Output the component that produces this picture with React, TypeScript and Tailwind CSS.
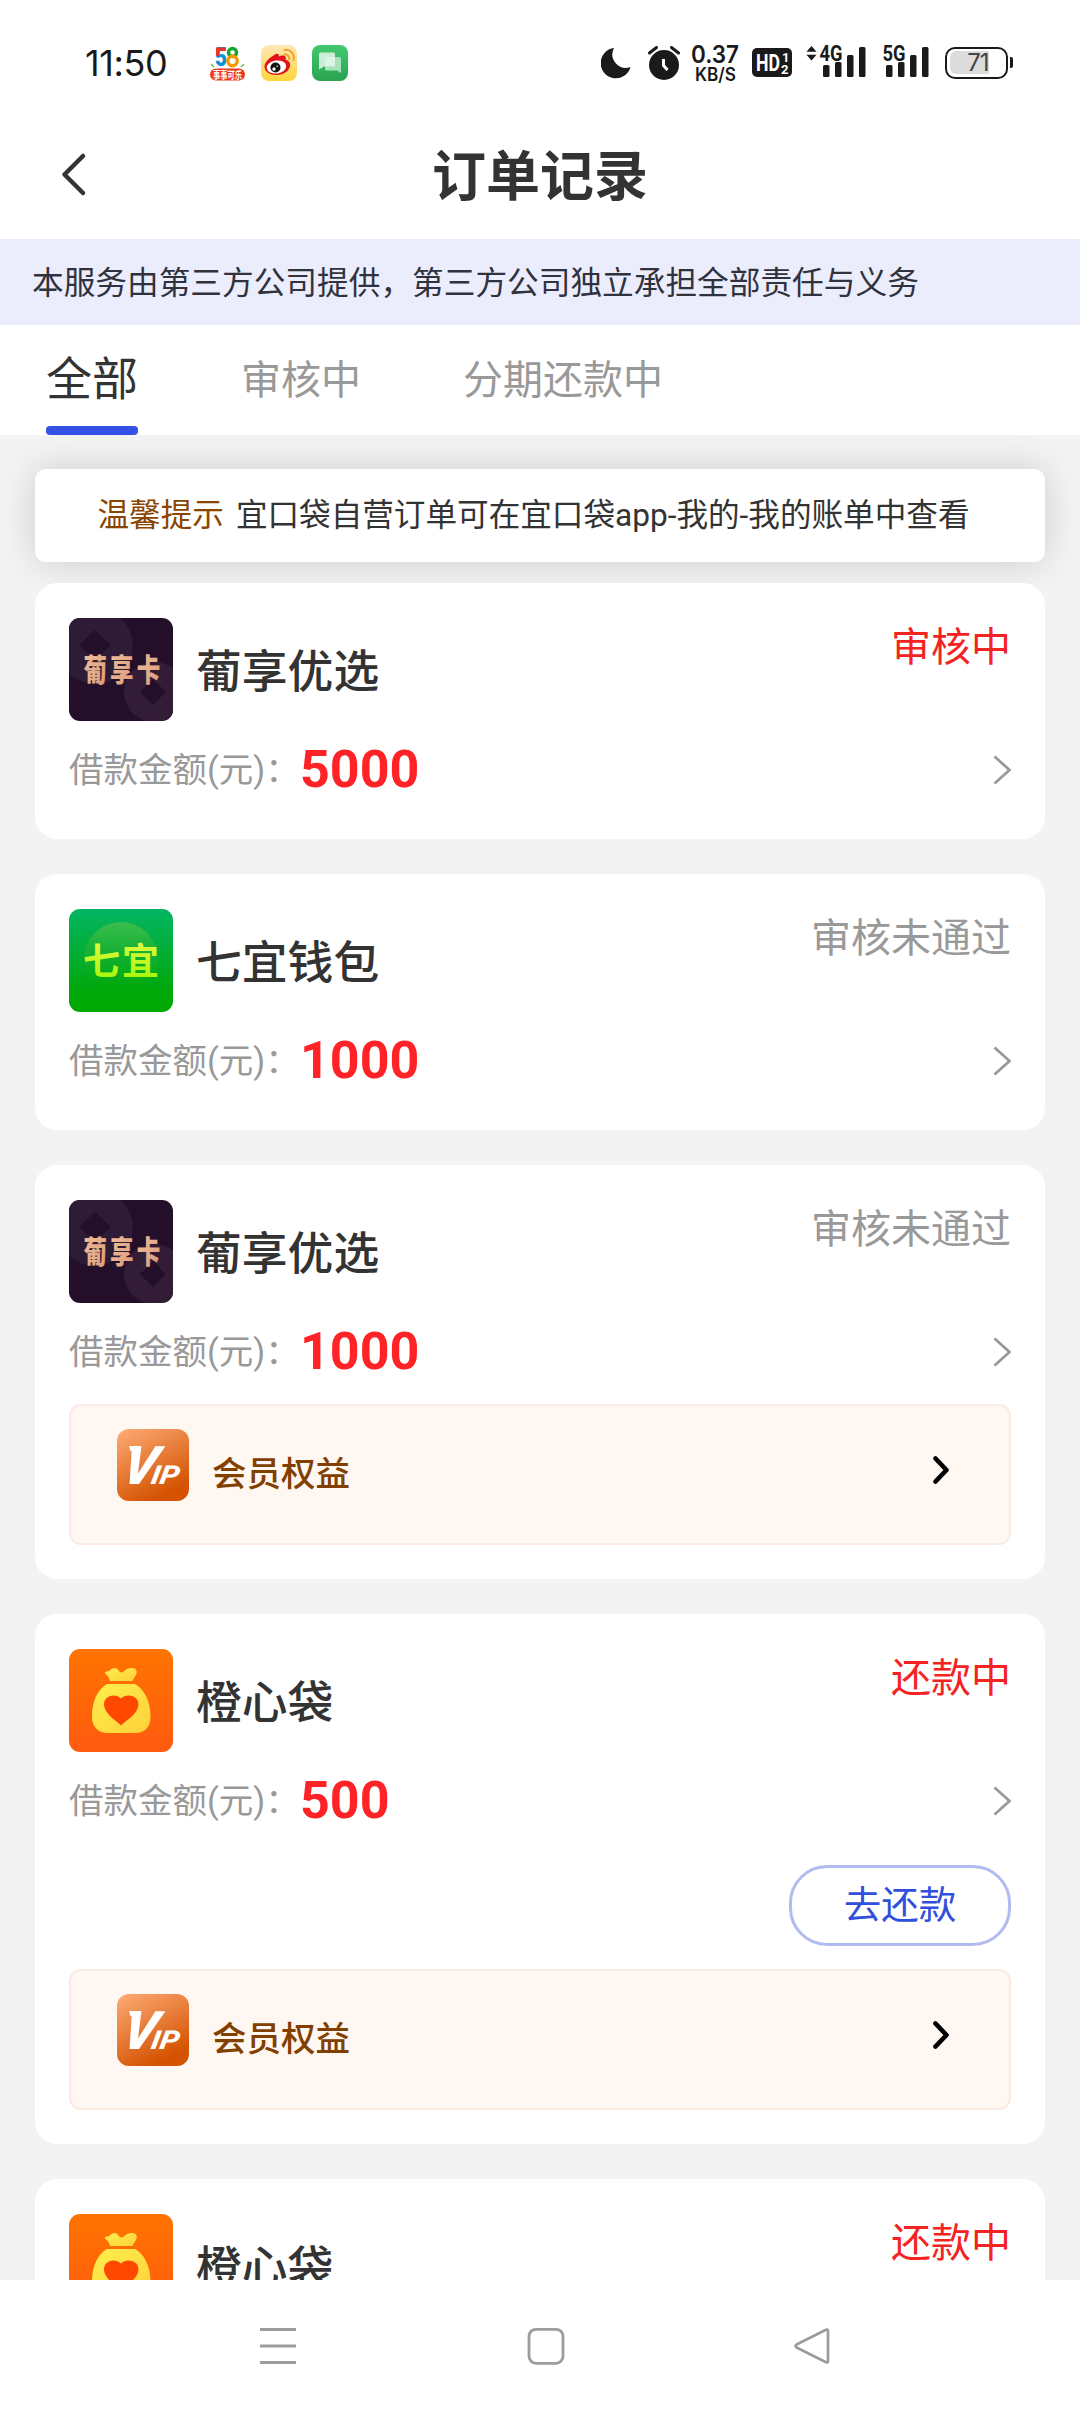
type Order = {
  name: string;
  logo: "puxiang" | "qiyi" | "chengxin";
  amount: string;
  status: string;
  active?: boolean;
  repay?: boolean;
  member?: boolean;
};

const orders: Order[] = [
  { name: "葡享优选", logo: "puxiang", amount: "5000", status: "审核中", active: true },
  { name: "七宜钱包", logo: "qiyi", amount: "1000", status: "审核未通过" },
  { name: "葡享优选", logo: "puxiang", amount: "1000", status: "审核未通过", member: true },
  {
    name: "橙心袋",
    logo: "chengxin",
    amount: "500",
    status: "还款中",
    active: true,
    repay: true,
    member: true,
  },
  {
    name: "橙心袋",
    logo: "chengxin",
    amount: "500",
    status: "还款中",
    active: true,
    repay: true,
    member: true,
  },
];

function Signal({ label, arrows }: { label: string; arrows?: boolean }) {
  return (
    <svg width="62" height="36" viewBox="0 0 62 36" className="block overflow-visible" fill="#1a1a1a">
      {arrows && (
        <>
          <path d="M5.5 1 10.500 6.800H.5z" />
          <path d="M5.5 15.500.5 9.700h10z" />
        </>
      )}
      <text
        x="13.500"
        y="16"
        fontSize="22"
        fontWeight="700"
        fontFamily="Roboto, sans-serif"
        textLength="23"
        lengthAdjust="spacingAndGlyphs"
      >
        {label}
      </text>
      <rect x="17" y="20" width="6.500" height="12" rx="1.500" />
      <rect x="29" y="17" width="6.500" height="15" rx="1.500" />
      <rect x="41" y="10" width="6.500" height="22" rx="1.500" />
      <rect x="53" y="2" width="6.500" height="30" rx="1.500" />
    </svg>
  );
}

function AppBadges() {
  return (
    <div className="ml-[42px] flex items-center gap-[15px]">
      <svg width="37" height="36" viewBox="0 0 37 36" className="overflow-visible">
        <text
          x="6"
          y="20.500"
          fill="#0a8fd8"
          fontFamily="Roboto, sans-serif"
          fontWeight="900"
          fontSize="25"
          textLength="12"
          lengthAdjust="spacingAndGlyphs"
        >
          5
        </text>
        <path d="M17 4.300H8.700V11" fill="none" stroke="#e8342c" strokeWidth="3.500" />
        <circle cx="23.500" cy="7.500" r="4" fill="none" stroke="#12a82c" strokeWidth="3.400" />
        <circle cx="23.500" cy="16" r="4.700" fill="none" stroke="#f59a00" strokeWidth="3.400" />
        <path d="M2 19l3 3M35 19l-3 3" stroke="#7cc04b" strokeWidth="1.500" />
        <rect x="1" y="23.500" width="35" height="12" rx="6" fill="#ee3a1c" />
        <text
          x="4"
          y="33.500"
          fill="#fff"
          fontSize="10.500"
          fontWeight="700"
          fontFamily="'Noto Sans CJK SC', sans-serif"
          textLength="29"
          lengthAdjust="spacingAndGlyphs"
        >
          事事可乐
        </text>
      </svg>
      <svg width="36" height="36" viewBox="0 0 36 36">
        <defs>
          <linearGradient id="wb" x1="0" y1="0" x2="0" y2="1">
            <stop offset="0" stopColor="#fde9b8" />
            <stop offset="1" stopColor="#ffd43a" />
          </linearGradient>
        </defs>
        <rect width="36" height="36" rx="8" fill="url(#wb)" />
        <path
          d="M12.500 10.500c2-2 4.500-2.500 5.200-1 .3.700.2 1.500.1 2 2.500-1.200 6.700-1.700 7 1.300.1.800-.1 1.400-.3 1.900 3 .8 5 2.700 4.600 6-.6 5-6.500 9.300-13.600 9.300C9 30 3.500 27 3.500 21.500c0-4 4.500-8.500 9-11z"
          fill="#e1141c"
        />
        <ellipse cx="15.500" cy="22" rx="9.800" ry="6.500" fill="#fff" transform="rotate(-7 15.500 22)" />
        <circle cx="14.500" cy="22.500" r="5" fill="#111" />
        <circle cx="13" cy="24" r="1.700" fill="#fff" />
        <circle cx="16.200" cy="21.300" r=".8" fill="#fff" />
        <path
          d="M23.500 9.500c3-.5 5.500 2 4.800 5M23.500 5c6-1 10.500 4 9 10"
          fill="none"
          stroke="#f0a02c"
          strokeWidth="2"
          strokeLinecap="round"
        />
      </svg>
      <svg width="36" height="36" viewBox="0 0 36 36">
        <defs>
          <linearGradient id="msg" x1="0" y1="0" x2="0" y2="1">
            <stop offset="0" stopColor="#41c96f" />
            <stop offset="1" stopColor="#2ba351" />
          </linearGradient>
        </defs>
        <rect width="36" height="36" rx="8" fill="url(#msg)" />
        <path
          d="M13 12h14.500a1.500 1.500 0 0 1 1.500 1.500V28l-4-2.500H14.500a1.500 1.500 0 0 1-1.500-1.500z"
          fill="#a8e2bb"
        />
        <path
          d="M8.500 7.500h13A1.500 1.500 0 0 1 23 9v11a1.500 1.500 0 0 1-1.500 1.500H12L7 24.500V9a1.500 1.500 0 0 1 1.500-1.500z"
          fill="#e4f7ea"
          fillOpacity=".85"
        />
      </svg>
    </div>
  );
}

function StatusBar() {
  return (
    <div className="flex h-[125px] items-center pl-[85px] pr-[67px] text-[#1a1a1a]">
      <span className="w-[82px] whitespace-nowrap font-[Inter] text-[36px] leading-[48px] tracking-[-0.4px]">
        11:50
      </span>
      <AppBadges />
      <div className="ml-auto flex items-center">
        <svg width="30" height="32" viewBox="0 0 30 32">
          <path d="M13 1A15.200 15.200 0 1 0 29.500 20 13.500 13.500 0 0 1 13 1z" fill="#1a1a1a" />
        </svg>
        <svg width="32" height="36" viewBox="0 0 32 36" className="ml-[17px]">
          <circle cx="16" cy="20" r="15" fill="#1a1a1a" />
          <path
            d="M1.500 8 8.500 2.500M30.500 8l-7-5.500"
            stroke="#1a1a1a"
            strokeWidth="3"
            strokeLinecap="round"
          />
          <path d="M15.500 14v6.500l4 4.500" fill="none" stroke="#fff" strokeWidth="3" />
        </svg>
        <svg
          width="49"
          height="40"
          viewBox="0 0 49 40"
          className="ml-[11px] overflow-visible"
          fill="#1a1a1a"
          fontFamily="Inter, sans-serif"
          fontWeight="600"
        >
          <text x="0" y="20" fontSize="24" textLength="48" lengthAdjust="spacingAndGlyphs">
            0.37
          </text>
          <text x="4" y="38" fontSize="18.500" textLength="41" lengthAdjust="spacingAndGlyphs">
            KB/S
          </text>
        </svg>
        <svg width="40" height="29" viewBox="0 0 40 29" className="ml-[12px]">
          <rect width="40" height="29" rx="5" fill="#1a1a1a" />
          <g fill="#fff" fontFamily="Roboto, sans-serif" fontWeight="700">
            <text x="4" y="23" fontSize="23" textLength="24" lengthAdjust="spacingAndGlyphs">
              HD
            </text>
            <text x="30" y="14" fontSize="13">
              1
            </text>
            <text x="29" y="26" fontSize="13">
              2
            </text>
          </g>
        </svg>
        <div className="ml-[14px]">
          <Signal label="4G" arrows />
        </div>
        <div className="ml-[1px]">
          <Signal label="5G" />
        </div>
        <div className="ml-[14px] flex items-center">
          <div className="flex h-[32px] w-[63px] items-center rounded-[10px] border-2 border-[#1a1a1a] p-[2.500px]">
            <div className="flex h-full w-[39px] items-center justify-end rounded-l-[6px] bg-[#dcdcdc] font-[Inter] text-[24px] leading-[24px] tracking-[-1px] text-[#444]">
              71
            </div>
          </div>
          <div className="ml-[2px] h-[11px] w-[3px] rounded-r-[2px] bg-[#1a1a1a]" />
        </div>
      </div>
    </div>
  );
}

function Header() {
  return (
    <header className="flex h-[114px] items-start pl-[60px] pr-[60px]">
      <svg width="28" height="46" viewBox="0 0 28 46" className="mt-[25.500px] shrink-0">
        <path
          d="M23 5 4.500 23.500 23 42"
          fill="none"
          stroke="#333"
          strokeWidth="4.500"
          strokeLinecap="round"
          strokeLinejoin="round"
        />
      </svg>
      <h1 className="flex-1 pr-[28px] text-center text-[54px] font-bold leading-[105px] text-[#333]">
        订单记录
      </h1>
    </header>
  );
}

function Tabs() {
  return (
    <nav className="relative z-10 flex h-[110px] items-start bg-white pl-[46px] text-[40px] leading-[112px] text-[#999]">
      <div className="flex h-full w-[92px] flex-col">
        <span className="h-[101px] text-[46px] leading-[108px] text-[#333]">全部</span>
        <span className="h-[9px] rounded-[4px] bg-[#3451e6]" />
      </div>
      <span className="ml-[103px]">审核中</span>
      <span className="ml-[102px]">分期还款中</span>
    </nav>
  );
}

function Logo({ kind }: { kind: Order["logo"] }) {
  if (kind === "puxiang") {
    return (
      <svg width="104" height="103" viewBox="0 0 104 103" className="shrink-0 rounded-[11px]">
        <defs>
          <linearGradient id="px" x1="0" y1="0" x2="1" y2="1">
            <stop offset="0" stopColor="#f3c3a0" />
            <stop offset="1" stopColor="#d99876" />
          </linearGradient>
        </defs>
        <rect width="104" height="103" fill="#230f29" />
        <path
          fillRule="evenodd"
          d="M-12 28a38 38 0 1 0 76 0 38 38 0 1 0-76 0zM26 12l16 15-16 15-16-15z"
          fill="#2e1b35"
        />
        <path
          fillRule="evenodd"
          d="M55 74a30 30 0 1 0 60 0 30 30 0 1 0-60 0zM84 61l13 13-13 13-13-13z"
          fill="#331d36"
        />
        <g fill="url(#px)" fontFamily="'Noto Sans CJK SC', sans-serif" fontWeight="900" fontSize="31">
          <text x="19" y="63" transform="scale(.76 1)">
            葡
          </text>
          <text x="54" y="63" transform="scale(.76 1)">
            享
          </text>
          <text x="89" y="63" transform="scale(.76 1)">
            卡
          </text>
        </g>
      </svg>
    );
  }

  if (kind === "qiyi") {
    return (
      <svg width="104" height="103" viewBox="0 0 104 103" className="shrink-0 rounded-[11px]">
        <defs>
          <linearGradient id="qyBg" x1="0" y1="0" x2="0" y2="1">
            <stop offset="0" stopColor="#04b563" />
            <stop offset=".8" stopColor="#00a80a" />
            <stop offset="1" stopColor="#00a800" />
          </linearGradient>
          <linearGradient id="qyDisc" x1="0" y1="0" x2="0" y2="1">
            <stop offset="0" stopColor="#4bbf4b" stopOpacity=".8" />
            <stop offset=".9" stopColor="#10a810" stopOpacity="0" />
          </linearGradient>
          <linearGradient id="qyText" x1="0" y1="0" x2="0" y2="1">
            <stop offset="0" stopColor="#f0fb4a" />
            <stop offset="1" stopColor="#9cf500" />
          </linearGradient>
        </defs>
        <rect width="104" height="103" fill="url(#qyBg)" />
        <circle cx="52" cy="50" r="37" fill="url(#qyDisc)" />
        <g fill="url(#qyText)" fontFamily="'Noto Sans CJK SC', sans-serif" fontWeight="700" fontSize="37">
          <text x="14" y="66">
            七
          </text>
          <text x="53" y="66">
            宜
          </text>
        </g>
      </svg>
    );
  }

  return (
    <svg width="104" height="103" viewBox="0 0 104 103" className="shrink-0 rounded-[11px]">
      <defs>
        <linearGradient id="cxBg" x1="0" y1="0" x2="0" y2="1">
          <stop offset="0" stopColor="#ff7400" />
          <stop offset="1" stopColor="#ff5a10" />
        </linearGradient>
        <linearGradient id="cxBag" x1="0" y1="0" x2="1" y2="1">
          <stop offset="0" stopColor="#fff04e" />
          <stop offset="1" stopColor="#fdcf38" />
        </linearGradient>
      </defs>
      <rect width="104" height="103" fill="url(#cxBg)" />
      <path
        d="M41 32c-.5-3-2-5-4.500-7-1.300-1-.5-2.500 1.500-2.500 3 0 4-3.500 7.500-3.500 4 0 4 4.500 7 4.500 2.700 0 4-4.500 9.500-4.500 4.500 0 6.500 2 5.500 5.500-.8 3-3 4.500-4 7.500z"
        fill="url(#cxBag)"
      />
      <path
        d="M38 35h28c9 5 15.500 17 15.500 32.500C81.500 78 76 84 66 84H39c-10 0-16-6-16-16.500C23 52 29 40 38 35z"
        fill="url(#cxBag)"
      />
      <path
        d="M52 76.500C46 71 35 64 35 55.500c0-9.500 12-11.500 17-6 5-5.500 17.500-3.500 17.500 6 0 8.500-11.500 15.500-17.500 21z"
        fill="#ff4800"
      />
    </svg>
  );
}

function MemberBenefits() {
  return (
    <div className="mt-[17px] flex h-[141px] items-start rounded-[12px] border-2 border-[#fbebe2] bg-[#fff7f1] pl-[46px] pr-[59px] pt-[23px]">
      <svg width="72" height="72" viewBox="0 0 72 72" className="shrink-0">
        <defs>
          <linearGradient id="vip" x1="0" y1="0" x2=".5" y2="1">
            <stop offset="0" stopColor="#fdac77" />
            <stop offset="1" stopColor="#d45200" />
          </linearGradient>
        </defs>
        <rect width="72" height="72" rx="12" fill="url(#vip)" />
        <g fill="#fff" fontFamily="Roboto, sans-serif" fontWeight="900" fontStyle="italic">
          <text
            fontSize="53"
            textLength="33"
            lengthAdjust="spacingAndGlyphs"
            transform="translate(3 55) skewX(-13)"
          >
            V
          </text>
          <text
            fontSize="26"
            fontWeight="800"
            textLength="28"
            lengthAdjust="spacingAndGlyphs"
            transform="translate(33 55) skewX(-10)"
          >
            IP
          </text>
        </g>
        <path d="M12 17h11v5H13.500z" fill="#fff" />
      </svg>
      <span className="ml-[23px] mt-[10px] text-[34.500px] font-medium leading-[70px] text-[#824000]">
        会员权益
      </span>
      <svg width="18" height="30" viewBox="0 0 18 30" className="ml-auto mt-[26px]">
        <path
          d="M3.500 3.500 14.500 15 3.500 26.500"
          fill="none"
          stroke="#000"
          strokeWidth="4.700"
          strokeLinecap="round"
          strokeLinejoin="round"
        />
      </svg>
    </div>
  );
}

function OrderCard({ order }: { order: Order }) {
  return (
    <article className="shrink-0 rounded-[22px] bg-white px-[34px] pb-[34px] pt-[35px]">
      <div className="flex h-[103px] items-start">
        <Logo kind={order.logo} />
        <h2 className="ml-[23px] text-[45.800px] font-medium leading-[109px] text-[#333]">{order.name}</h2>
        <span
          className={
            order.active
              ? "ml-auto text-[40px] leading-[60px] text-[#f52222]"
              : "ml-auto text-[40px] leading-[60px] text-[#999]"
          }
        >
          {order.status}
        </span>
      </div>

      <div className="mt-[14px] flex h-[70px] items-center">
        <span className="w-[231px] whitespace-nowrap text-[34.500px] leading-[70px] text-[#999]">
          借款金额(元)：
        </span>
        <span className="text-[52px] font-bold leading-[70px] text-[#ff2226]">{order.amount}</span>
        <svg width="18" height="30" viewBox="0 0 18 30" className="ml-auto">
          <path d="M1.500 1.500 16.500 15l-15 13.500" fill="none" stroke="#999" strokeWidth="2.800" />
        </svg>
      </div>

      {order.repay && (
        <div className="flex h-[116px] justify-end pt-[29px]">
          <button className="h-[81px] w-[222px] rounded-[38px] border-3 border-[#b2bbef] text-[37.500px] leading-[73px] text-[#2f4fdc]">
            去还款
          </button>
        </div>
      )}

      {order.member && <MemberBenefits />}
    </article>
  );
}

function NavBar() {
  return (
    <footer className="flex h-[132px] shrink-0 items-start bg-white pl-[259px] pt-[47px]">
      <svg width="38" height="38" viewBox="0 0 38 38">
        <path d="M1 2.500h36M1 19h36M1 35.500h36" stroke="#9c9c9c" strokeWidth="2.800" />
      </svg>
      <svg width="38" height="38" viewBox="0 0 38 38" className="ml-[230px]">
        <rect x="2" y="2.300" width="34" height="34" rx="7" fill="none" stroke="#9c9c9c" strokeWidth="2.800" />
      </svg>
      <svg width="38" height="38" viewBox="0 0 38 38" className="ml-[228px]">
        <path
          d="M33 2.800 3.500 17.500q-2 1.500 0 3L33 35.200q2 .8 2-1.200V4q0-2-2-1.200z"
          fill="none"
          stroke="#9c9c9c"
          strokeWidth="2.700"
          strokeLinejoin="round"
        />
      </svg>
    </footer>
  );
}

export default function App() {
  return (
    <div className="flex h-[2412px] w-[1080px] flex-col overflow-hidden bg-[#f3f3f3] font-[Roboto,'Noto_Sans_CJK_SC',sans-serif]">
      <div className="shrink-0 bg-white">
        <StatusBar />
        <Header />
      </div>

      <p className="h-[86px] shrink-0 whitespace-nowrap bg-[#ebedfc] pl-[32px] text-[31.680px] leading-[90px] text-[#30323e]">
        本服务由第三方公司提供，第三方公司独立承担全部责任与义务
      </p>

      <Tabs />

      <main className="flex min-h-0 flex-1 flex-col overflow-hidden px-[35px] pt-[34px]">
        <div className="flex h-[93px] shrink-0 items-center gap-[12px] whitespace-nowrap rounded-[11px] bg-white pl-[62.500px] text-[31.600px] leading-[93px] text-[#333] shadow-[0_0_36px_rgba(0,0,0,0.16)]">
          <span className="text-[#8a4500]">温馨提示</span>
          <span>宜口袋自营订单可在宜口袋app-我的-我的账单中查看</span>
        </div>

        <div className="relative mt-[21px] flex flex-col gap-[35px]">
          {orders.map((order, i) => (
            <OrderCard key={i} order={order} />
          ))}
        </div>
      </main>

      <NavBar />
    </div>
  );
}
